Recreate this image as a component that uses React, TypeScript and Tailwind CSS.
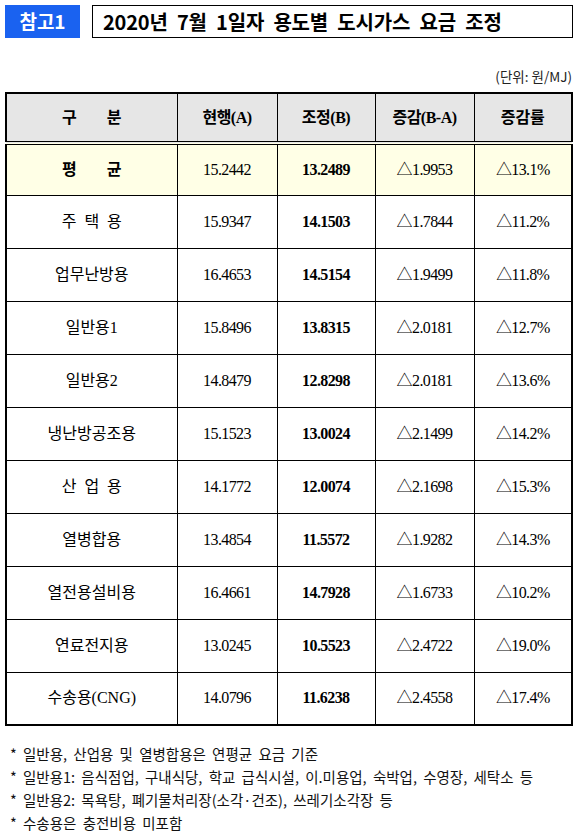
import React from "react";

const rows: [string, string, string, string, string][] = [
  ["주 택 용", "15.9347", "14.1503", "△1.7844", "△11.2%"],
  ["업무난방용", "16.4653", "14.5154", "△1.9499", "△11.8%"],
  ["일반용1", "15.8496", "13.8315", "△2.0181", "△12.7%"],
  ["일반용2", "14.8479", "12.8298", "△2.0181", "△13.6%"],
  ["냉난방공조용", "15.1523", "13.0024", "△2.1499", "△14.2%"],
  ["산 업 용", "14.1772", "12.0074", "△2.1698", "△15.3%"],
  ["열병합용", "13.4854", "11.5572", "△1.9282", "△14.3%"],
  ["열전용설비용", "16.4661", "14.7928", "△1.6733", "△10.2%"],
  ["연료전지용", "13.0245", "10.5523", "△2.4722", "△19.0%"],
  ["수송용(CNG)", "14.0796", "11.6238", "△2.4558", "△17.4%"],
];

const serif = "font-['Liberation_Serif','Noto_Sans_CJK_KR',serif]";
const sans = "font-['Noto_Sans_CJK_KR',sans-serif]";

export default function App() {
  return (
    <div className="w-[578px] h-[835px] bg-white text-black overflow-hidden">
      <div className="flex pt-[5px] pl-[5px] pr-[5px] gap-[12px]">
        <div className={`w-[75px] h-[33px] bg-[#1a62f0] flex items-center justify-center text-white font-bold text-[19px] ${sans}`}>
          참고1
        </div>
        <div
          className={`w-[481px] h-[33px] border border-black flex items-center pl-[10px] font-bold text-[20px] tracking-[-0.2px] ${sans}`}
          style={{ wordSpacing: "5px" }}
        >
          2020년 7월 1일자 용도별 도시가스 요금 조정
        </div>
      </div>
      <div className={`h-[54px] flex items-end justify-end pr-[6px] pb-[6px] text-[13.5px] text-[#222] ${sans}`}>
        (단위: 원/MJ)
      </div>
      <table className={`ml-[5px] w-[566px] border-collapse border-2 border-black table-fixed ${serif}`}>
        <colgroup>
          <col className="w-[171px]" />
          <col className="w-[100px]" />
          <col className="w-[98px]" />
          <col className="w-[99px]" />
          <col className="w-[98px]" />
        </colgroup>
        <thead>
          <tr className="h-[50px] bg-[#e6e6e6] font-bold text-[16px] border-b-4 border-double border-black">
            <th className="border border-black font-bold" style={{ wordSpacing: "26px" }}>구 분</th>
            <th className="border border-black font-bold tracking-[-0.5px]">현행(A)</th>
            <th className="border border-black font-bold tracking-[-0.5px]">조정(B)</th>
            <th className="border border-black font-bold tracking-[-0.5px]">증감(B-A)</th>
            <th className="border border-black font-bold">증감률</th>
          </tr>
        </thead>
        <tbody className="text-[16px]">
          <tr className="h-[52px] bg-[#ffffe6]">
            <td className="border border-black text-center font-bold" style={{ wordSpacing: "26px" }}>평 균</td>
            <td className="border border-black text-center tracking-[-0.6px]">15.2442</td>
            <td className="border border-black text-center font-bold tracking-[-0.6px]">13.2489</td>
            <td className="border border-black text-center tracking-[-0.6px]">△1.9953</td>
            <td className="border border-black text-center tracking-[-0.6px]">△13.1%</td>
          </tr>
          {rows.map((r) => (
            <tr key={r[0]} className="h-[53px]">
              <td className="border border-black text-center" style={{ wordSpacing: r[0].includes(" ") ? "4px" : undefined }}>{r[0]}</td>
              <td className="border border-black text-center tracking-[-0.6px]">{r[1]}</td>
              <td className="border border-black text-center font-bold tracking-[-0.6px]">{r[2]}</td>
              <td className="border border-black text-center tracking-[-0.6px]">{r[3]}</td>
              <td className="border border-black text-center tracking-[-0.6px]">{r[4]}</td>
            </tr>
          ))}
        </tbody>
      </table>
      <div className={`pt-[16px] pl-[10px] flex flex-col gap-0 text-[14.5px] leading-[23px] text-[#111] ${sans}`} style={{ wordSpacing: "3px" }}>
        <div>* 일반용, 산업용 및 열병합용은 연평균 요금 기준</div>
        <div>* 일반용1: 음식점업, 구내식당, 학교 급식시설, 이.미용업, 숙박업, 수영장, 세탁소 등</div>
        <div>* 일반용2: 목욕탕, 폐기물처리장(소각·건조), 쓰레기소각장 등</div>
        <div>* 수송용은 충전비용 미포함</div>
      </div>
    </div>
  );
}
